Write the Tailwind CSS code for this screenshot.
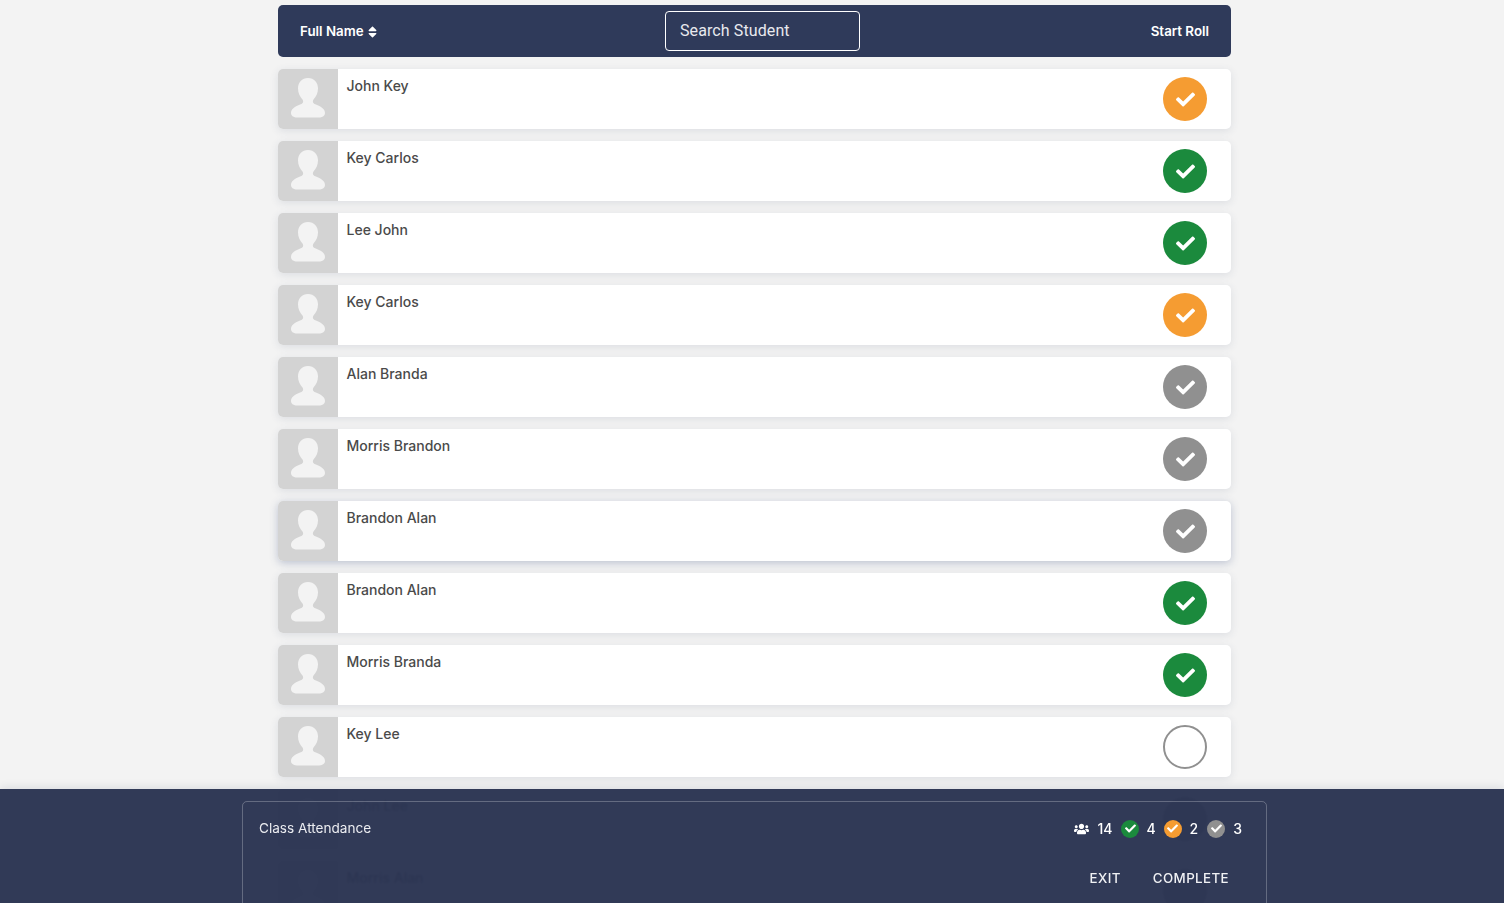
<!DOCTYPE html>
<html>
<head>
<meta charset="utf-8">
<script src="https://cdn.jsdelivr.net/npm/@tailwindcss/browser@4"></script>
</head>
<body class="bg-[#f3f3f3]">
<div class="relative h-[903px] overflow-hidden font-['Inter',sans-serif]">
  <div class="ml-[278px] w-[953px] pt-[5px] flex flex-col gap-3">
    <div class="h-[52px] rounded-[5px] bg-[#2f3a5a] flex items-center pl-[22px] pr-[22px] text-white">
      <div class="w-[365px] mt-[2px] flex items-center gap-1 text-[13.33px] font-semibold">Full Name
        <svg class="w-[9px] h-[14px]" viewBox="0 0 320 512" fill="currentColor"><path d="M41 288h238c21.4 0 32.1 25.9 17 41L177 448c-9.4 9.4-24.6 9.4-33.9 0L24 329c-15.1-15.1-4.4-41 17-41zm255-105L177 64c-9.4-9.4-24.6-9.4-33.9 0L24 183c-15.1 15.1-4.4 41 17 41h238c21.4 0 32.1-25.9 17-41z"/></svg>
      </div>
      <div class="w-[195px] h-10 rounded-[4px] border border-white flex items-center px-[14px] font-['Roboto',sans-serif] text-base tracking-[0.1px] text-[#e8e9ee]">Search Student</div>
      <div class="ml-auto mt-[2px] text-[13.33px] font-semibold">Start Roll</div>
    </div>

    <div class="h-[60px] rounded-[5px] bg-white shadow-[0_2px_8px_rgba(60,70,110,0.12)] flex overflow-hidden">
      <svg class="w-[60px] h-[60px] shrink-0 bg-[#d3d3d3]" viewBox="0 0 60 60" fill="#f3f3f3"><path d="M30 9c-6 0-10 4.500-10 10.500 0 4.500 2 8.500 4.500 11 1 1.500 1 3.500-1 4.500-3.500 1.500-10.500 3.500-10.500 9 0 3 3 4.500 6 4.500h22c3 0 6-1.500 6-4.500 0-5.500-7-7.500-10.500-9-2-1-2-3-1-4.500 2.500-2.500 4.500-6.500 4.500-11C40 13.500 36 9 30 9z"/></svg>
      <div class="flex-1 pl-[8.5px] pt-[7px] text-sm font-medium text-[#4a4a4a] leading-[19px]">John Key</div>
      <div class="pr-6 pt-2"><div class="w-11 h-11 rounded-full bg-[#f59c32] flex items-center justify-center text-white"><svg class="w-[19px] h-[19px]" viewBox="0 0 512 512" fill="currentColor"><path d="M173.898 439.404l-166.4-166.4c-9.997-9.997-9.997-26.206 0-36.204l36.203-36.204c9.997-9.998 26.207-9.998 36.204 0L192 312.69 432.095 72.596c9.997-9.997 26.207-9.997 36.204 0l36.203 36.204c9.997 9.997 9.997 26.206 0 36.204l-294.4 294.401c-9.998 9.997-26.207 9.997-36.204-.001z"/></svg></div></div>
    </div>
    <div class="h-[60px] rounded-[5px] bg-white shadow-[0_2px_8px_rgba(60,70,110,0.12)] flex overflow-hidden">
      <svg class="w-[60px] h-[60px] shrink-0 bg-[#d3d3d3]" viewBox="0 0 60 60" fill="#f3f3f3"><path d="M30 9c-6 0-10 4.500-10 10.500 0 4.500 2 8.500 4.500 11 1 1.500 1 3.500-1 4.500-3.500 1.500-10.500 3.500-10.500 9 0 3 3 4.500 6 4.500h22c3 0 6-1.500 6-4.500 0-5.500-7-7.500-10.500-9-2-1-2-3-1-4.500 2.500-2.500 4.500-6.500 4.500-11C40 13.500 36 9 30 9z"/></svg>
      <div class="flex-1 pl-[8.5px] pt-[7px] text-sm font-medium text-[#4a4a4a] leading-[19px]">Key Carlos</div>
      <div class="pr-6 pt-2"><div class="w-11 h-11 rounded-full bg-[#1b8a3d] flex items-center justify-center text-white"><svg class="w-[19px] h-[19px]" viewBox="0 0 512 512" fill="currentColor"><path d="M173.898 439.404l-166.4-166.4c-9.997-9.997-9.997-26.206 0-36.204l36.203-36.204c9.997-9.998 26.207-9.998 36.204 0L192 312.69 432.095 72.596c9.997-9.997 26.207-9.997 36.204 0l36.203 36.204c9.997 9.997 9.997 26.206 0 36.204l-294.4 294.401c-9.998 9.997-26.207 9.997-36.204-.001z"/></svg></div></div>
    </div>
    <div class="h-[60px] rounded-[5px] bg-white shadow-[0_2px_8px_rgba(60,70,110,0.12)] flex overflow-hidden">
      <svg class="w-[60px] h-[60px] shrink-0 bg-[#d3d3d3]" viewBox="0 0 60 60" fill="#f3f3f3"><path d="M30 9c-6 0-10 4.500-10 10.500 0 4.500 2 8.500 4.500 11 1 1.500 1 3.500-1 4.500-3.500 1.500-10.500 3.500-10.500 9 0 3 3 4.500 6 4.500h22c3 0 6-1.500 6-4.500 0-5.500-7-7.500-10.500-9-2-1-2-3-1-4.500 2.500-2.500 4.500-6.500 4.500-11C40 13.500 36 9 30 9z"/></svg>
      <div class="flex-1 pl-[8.5px] pt-[7px] text-sm font-medium text-[#4a4a4a] leading-[19px]">Lee John</div>
      <div class="pr-6 pt-2"><div class="w-11 h-11 rounded-full bg-[#1b8a3d] flex items-center justify-center text-white"><svg class="w-[19px] h-[19px]" viewBox="0 0 512 512" fill="currentColor"><path d="M173.898 439.404l-166.4-166.4c-9.997-9.997-9.997-26.206 0-36.204l36.203-36.204c9.997-9.998 26.207-9.998 36.204 0L192 312.69 432.095 72.596c9.997-9.997 26.207-9.997 36.204 0l36.203 36.204c9.997 9.997 9.997 26.206 0 36.204l-294.4 294.401c-9.998 9.997-26.207 9.997-36.204-.001z"/></svg></div></div>
    </div>
    <div class="h-[60px] rounded-[5px] bg-white shadow-[0_2px_8px_rgba(60,70,110,0.12)] flex overflow-hidden">
      <svg class="w-[60px] h-[60px] shrink-0 bg-[#d3d3d3]" viewBox="0 0 60 60" fill="#f3f3f3"><path d="M30 9c-6 0-10 4.500-10 10.500 0 4.500 2 8.500 4.500 11 1 1.500 1 3.500-1 4.500-3.500 1.500-10.500 3.500-10.500 9 0 3 3 4.500 6 4.500h22c3 0 6-1.500 6-4.500 0-5.500-7-7.500-10.500-9-2-1-2-3-1-4.500 2.500-2.500 4.500-6.500 4.500-11C40 13.500 36 9 30 9z"/></svg>
      <div class="flex-1 pl-[8.5px] pt-[7px] text-sm font-medium text-[#4a4a4a] leading-[19px]">Key Carlos</div>
      <div class="pr-6 pt-2"><div class="w-11 h-11 rounded-full bg-[#f59c32] flex items-center justify-center text-white"><svg class="w-[19px] h-[19px]" viewBox="0 0 512 512" fill="currentColor"><path d="M173.898 439.404l-166.4-166.4c-9.997-9.997-9.997-26.206 0-36.204l36.203-36.204c9.997-9.998 26.207-9.998 36.204 0L192 312.69 432.095 72.596c9.997-9.997 26.207-9.997 36.204 0l36.203 36.204c9.997 9.997 9.997 26.206 0 36.204l-294.4 294.401c-9.998 9.997-26.207 9.997-36.204-.001z"/></svg></div></div>
    </div>
    <div class="h-[60px] rounded-[5px] bg-white shadow-[0_2px_8px_rgba(60,70,110,0.12)] flex overflow-hidden">
      <svg class="w-[60px] h-[60px] shrink-0 bg-[#d3d3d3]" viewBox="0 0 60 60" fill="#f3f3f3"><path d="M30 9c-6 0-10 4.500-10 10.500 0 4.500 2 8.500 4.500 11 1 1.500 1 3.500-1 4.500-3.500 1.500-10.500 3.500-10.500 9 0 3 3 4.500 6 4.500h22c3 0 6-1.500 6-4.500 0-5.500-7-7.500-10.500-9-2-1-2-3-1-4.500 2.500-2.500 4.500-6.500 4.500-11C40 13.500 36 9 30 9z"/></svg>
      <div class="flex-1 pl-[8.5px] pt-[7px] text-sm font-medium text-[#4a4a4a] leading-[19px]">Alan Branda</div>
      <div class="pr-6 pt-2"><div class="w-11 h-11 rounded-full bg-[#909090] flex items-center justify-center text-white"><svg class="w-[19px] h-[19px]" viewBox="0 0 512 512" fill="currentColor"><path d="M173.898 439.404l-166.4-166.4c-9.997-9.997-9.997-26.206 0-36.204l36.203-36.204c9.997-9.998 26.207-9.998 36.204 0L192 312.69 432.095 72.596c9.997-9.997 26.207-9.997 36.204 0l36.203 36.204c9.997 9.997 9.997 26.206 0 36.204l-294.4 294.401c-9.998 9.997-26.207 9.997-36.204-.001z"/></svg></div></div>
    </div>
    <div class="h-[60px] rounded-[5px] bg-white shadow-[0_2px_8px_rgba(60,70,110,0.12)] flex overflow-hidden">
      <svg class="w-[60px] h-[60px] shrink-0 bg-[#d3d3d3]" viewBox="0 0 60 60" fill="#f3f3f3"><path d="M30 9c-6 0-10 4.500-10 10.500 0 4.500 2 8.500 4.500 11 1 1.500 1 3.500-1 4.500-3.500 1.500-10.500 3.500-10.500 9 0 3 3 4.500 6 4.500h22c3 0 6-1.500 6-4.500 0-5.500-7-7.500-10.500-9-2-1-2-3-1-4.500 2.500-2.500 4.500-6.500 4.500-11C40 13.500 36 9 30 9z"/></svg>
      <div class="flex-1 pl-[8.5px] pt-[7px] text-sm font-medium text-[#4a4a4a] leading-[19px]">Morris Brandon</div>
      <div class="pr-6 pt-2"><div class="w-11 h-11 rounded-full bg-[#909090] flex items-center justify-center text-white"><svg class="w-[19px] h-[19px]" viewBox="0 0 512 512" fill="currentColor"><path d="M173.898 439.404l-166.4-166.4c-9.997-9.997-9.997-26.206 0-36.204l36.203-36.204c9.997-9.998 26.207-9.998 36.204 0L192 312.69 432.095 72.596c9.997-9.997 26.207-9.997 36.204 0l36.203 36.204c9.997 9.997 9.997 26.206 0 36.204l-294.4 294.401c-9.998 9.997-26.207 9.997-36.204-.001z"/></svg></div></div>
    </div>
    <div class="h-[60px] rounded-[5px] bg-white shadow-[0_2px_8px_rgba(60,80,130,0.3)] flex overflow-hidden">
      <svg class="w-[60px] h-[60px] shrink-0 bg-[#d3d3d3]" viewBox="0 0 60 60" fill="#f3f3f3"><path d="M30 9c-6 0-10 4.500-10 10.500 0 4.500 2 8.500 4.500 11 1 1.500 1 3.500-1 4.500-3.500 1.500-10.500 3.500-10.500 9 0 3 3 4.500 6 4.500h22c3 0 6-1.500 6-4.500 0-5.500-7-7.500-10.500-9-2-1-2-3-1-4.500 2.500-2.500 4.500-6.500 4.500-11C40 13.500 36 9 30 9z"/></svg>
      <div class="flex-1 pl-[8.5px] pt-[7px] text-sm font-medium text-[#4a4a4a] leading-[19px]">Brandon Alan</div>
      <div class="pr-6 pt-2"><div class="w-11 h-11 rounded-full bg-[#909090] flex items-center justify-center text-white"><svg class="w-[19px] h-[19px]" viewBox="0 0 512 512" fill="currentColor"><path d="M173.898 439.404l-166.4-166.4c-9.997-9.997-9.997-26.206 0-36.204l36.203-36.204c9.997-9.998 26.207-9.998 36.204 0L192 312.69 432.095 72.596c9.997-9.997 26.207-9.997 36.204 0l36.203 36.204c9.997 9.997 9.997 26.206 0 36.204l-294.4 294.401c-9.998 9.997-26.207 9.997-36.204-.001z"/></svg></div></div>
    </div>
    <div class="h-[60px] rounded-[5px] bg-white shadow-[0_2px_8px_rgba(60,70,110,0.12)] flex overflow-hidden">
      <svg class="w-[60px] h-[60px] shrink-0 bg-[#d3d3d3]" viewBox="0 0 60 60" fill="#f3f3f3"><path d="M30 9c-6 0-10 4.500-10 10.500 0 4.500 2 8.500 4.500 11 1 1.500 1 3.500-1 4.500-3.500 1.500-10.500 3.500-10.500 9 0 3 3 4.500 6 4.500h22c3 0 6-1.500 6-4.500 0-5.500-7-7.500-10.500-9-2-1-2-3-1-4.500 2.500-2.500 4.500-6.500 4.500-11C40 13.500 36 9 30 9z"/></svg>
      <div class="flex-1 pl-[8.5px] pt-[7px] text-sm font-medium text-[#4a4a4a] leading-[19px]">Brandon Alan</div>
      <div class="pr-6 pt-2"><div class="w-11 h-11 rounded-full bg-[#1b8a3d] flex items-center justify-center text-white"><svg class="w-[19px] h-[19px]" viewBox="0 0 512 512" fill="currentColor"><path d="M173.898 439.404l-166.4-166.4c-9.997-9.997-9.997-26.206 0-36.204l36.203-36.204c9.997-9.998 26.207-9.998 36.204 0L192 312.69 432.095 72.596c9.997-9.997 26.207-9.997 36.204 0l36.203 36.204c9.997 9.997 9.997 26.206 0 36.204l-294.4 294.401c-9.998 9.997-26.207 9.997-36.204-.001z"/></svg></div></div>
    </div>
    <div class="h-[60px] rounded-[5px] bg-white shadow-[0_2px_8px_rgba(60,70,110,0.12)] flex overflow-hidden">
      <svg class="w-[60px] h-[60px] shrink-0 bg-[#d3d3d3]" viewBox="0 0 60 60" fill="#f3f3f3"><path d="M30 9c-6 0-10 4.500-10 10.500 0 4.500 2 8.500 4.500 11 1 1.500 1 3.500-1 4.500-3.500 1.500-10.500 3.500-10.500 9 0 3 3 4.500 6 4.500h22c3 0 6-1.500 6-4.500 0-5.500-7-7.500-10.500-9-2-1-2-3-1-4.500 2.500-2.500 4.500-6.500 4.500-11C40 13.500 36 9 30 9z"/></svg>
      <div class="flex-1 pl-[8.5px] pt-[7px] text-sm font-medium text-[#4a4a4a] leading-[19px]">Morris Branda</div>
      <div class="pr-6 pt-2"><div class="w-11 h-11 rounded-full bg-[#1b8a3d] flex items-center justify-center text-white"><svg class="w-[19px] h-[19px]" viewBox="0 0 512 512" fill="currentColor"><path d="M173.898 439.404l-166.4-166.4c-9.997-9.997-9.997-26.206 0-36.204l36.203-36.204c9.997-9.998 26.207-9.998 36.204 0L192 312.69 432.095 72.596c9.997-9.997 26.207-9.997 36.204 0l36.203 36.204c9.997 9.997 9.997 26.206 0 36.204l-294.4 294.401c-9.998 9.997-26.207 9.997-36.204-.001z"/></svg></div></div>
    </div>
    <div class="h-[60px] rounded-[5px] bg-white shadow-[0_2px_8px_rgba(60,70,110,0.12)] flex overflow-hidden">
      <svg class="w-[60px] h-[60px] shrink-0 bg-[#d3d3d3]" viewBox="0 0 60 60" fill="#f3f3f3"><path d="M30 9c-6 0-10 4.500-10 10.500 0 4.500 2 8.500 4.500 11 1 1.500 1 3.500-1 4.500-3.500 1.500-10.500 3.500-10.500 9 0 3 3 4.500 6 4.500h22c3 0 6-1.500 6-4.500 0-5.500-7-7.500-10.500-9-2-1-2-3-1-4.500 2.500-2.500 4.500-6.500 4.500-11C40 13.500 36 9 30 9z"/></svg>
      <div class="flex-1 pl-[8.5px] pt-[7px] text-sm font-medium text-[#4a4a4a] leading-[19px]">Key Lee</div>
      <div class="pr-6 pt-2"><div class="w-11 h-11 rounded-full bg-white border-2 border-[#909090]"></div></div>
    </div>
    <div class="h-[60px] rounded-[5px] bg-white flex overflow-hidden">
      <svg class="w-[60px] h-[60px] shrink-0 bg-[#d3d3d3]" viewBox="0 0 60 60" fill="#f3f3f3"><path d="M30 9c-6 0-10 4.500-10 10.500 0 4.500 2 8.500 4.500 11 1 1.500 1 3.500-1 4.500-3.500 1.500-10.500 3.500-10.500 9 0 3 3 4.500 6 4.500h22c3 0 6-1.500 6-4.500 0-5.500-7-7.500-10.500-9-2-1-2-3-1-4.500 2.500-2.500 4.500-6.500 4.500-11C40 13.500 36 9 30 9z"/></svg>
      <div class="flex-1 pl-[8.5px] pt-[7px] text-sm font-medium text-[#4a4a4a] leading-[19px]">John Lee</div>
      <div class="pr-6 pt-2"><div class="w-11 h-11 rounded-full bg-[#909090]"></div></div>
    </div>
    <div class="h-[60px] rounded-[5px] bg-white flex overflow-hidden">
      <svg class="w-[60px] h-[60px] shrink-0 bg-[#d3d3d3]" viewBox="0 0 60 60" fill="#f3f3f3"><path d="M30 9c-6 0-10 4.500-10 10.500 0 4.500 2 8.500 4.500 11 1 1.500 1 3.500-1 4.500-3.500 1.500-10.500 3.500-10.500 9 0 3 3 4.500 6 4.500h22c3 0 6-1.500 6-4.500 0-5.500-7-7.500-10.500-9-2-1-2-3-1-4.500 2.500-2.500 4.500-6.500 4.500-11C40 13.500 36 9 30 9z"/></svg>
      <div class="flex-1 pl-[8.5px] pt-[7px] text-sm font-medium text-[#4a4a4a] leading-[19px]">Morris Alan</div>
      <div class="pr-6 pt-2"><div class="w-11 h-11 rounded-full bg-[#909090]"></div></div>
    </div>
  </div>

  <div class="absolute left-0 right-0 top-[789px] bottom-0 bg-[#2a3452]/97 backdrop-blur-[1px] pt-3 shadow-[0_-2px_8px_rgba(60,70,110,0.12)]">
    <div class="ml-[242px] w-[1025px] h-[120px] rounded-t-[5px] border border-white/25 text-white">
      <div class="flex items-center justify-between pl-4 pr-6 pt-[15px] h-[38px]">
        <div class="text-[13.6px] text-[#ecedf1]">Class Attendance</div>
        <div class="flex items-center text-sm font-medium">
          <svg class="w-[15px] h-[12px]" viewBox="0 0 640 512" fill="currentColor"><path d="M96 224c35.3 0 64-28.7 64-64s-28.7-64-64-64-64 28.7-64 64 28.7 64 64 64zm448 0c35.3 0 64-28.7 64-64s-28.7-64-64-64-64 28.7-64 64 28.7 64 64 64zm32 32h-64c-17.6 0-33.500 7.100-45.100 18.600 40.300 22.100 68.900 62 75.100 109.400h66c17.700 0 32-14.300 32-32v-32c0-35.300-28.700-64-64-64zm-256 0c61.900 0 112-50.100 112-112S381.900 32 320 32 208 82.100 208 144s50.100 112 112 112zm76.800 32h-8.300c-20.800 10-43.900 16-68.500 16s-47.600-6-68.500-16h-8.300C179.600 288 128 339.600 128 403.200V432c0 26.500 21.500 48 48 48h288c26.500 0 48-21.500 48-48v-28.800c0-63.600-51.600-115.200-115.200-115.200zm-223.700-13.400C161.500 263.100 145.600 256 128 256H64c-35.300 0-64 28.700-64 64v32c0 17.700 14.300 32 32 32h65.900c6.300-47.400 34.900-87.300 75.200-109.400z"/></svg>
          <span class="ml-2 pt-px">14</span>
          <span class="ml-[9px] w-[18px] h-[18px] rounded-full bg-[#1b8a3d] flex items-center justify-center"><svg class="w-[11px] h-[11px]" viewBox="0 0 512 512" fill="currentColor"><path d="M173.898 439.404l-166.4-166.4c-9.997-9.997-9.997-26.206 0-36.204l36.203-36.204c9.997-9.998 26.207-9.998 36.204 0L192 312.69 432.095 72.596c9.997-9.997 26.207-9.997 36.204 0l36.203 36.204c9.997 9.997 9.997 26.206 0 36.204l-294.4 294.401c-9.998 9.997-26.207 9.997-36.204-.001z"/></svg></span>
          <span class="ml-[7px] pt-px">4</span>
          <span class="ml-[8px] w-[18px] h-[18px] rounded-full bg-[#f59c32] flex items-center justify-center"><svg class="w-[11px] h-[11px]" viewBox="0 0 512 512" fill="currentColor"><path d="M173.898 439.404l-166.4-166.4c-9.997-9.997-9.997-26.206 0-36.204l36.203-36.204c9.997-9.998 26.207-9.998 36.204 0L192 312.69 432.095 72.596c9.997-9.997 26.207-9.997 36.204 0l36.203 36.204c9.997 9.997 9.997 26.206 0 36.204l-294.4 294.401c-9.998 9.997-26.207 9.997-36.204-.001z"/></svg></span>
          <span class="ml-2 pt-px">2</span>
          <span class="ml-[9px] w-[18px] h-[18px] rounded-full bg-[#909090] flex items-center justify-center"><svg class="w-[11px] h-[11px]" viewBox="0 0 512 512" fill="currentColor"><path d="M173.898 439.404l-166.4-166.4c-9.997-9.997-9.997-26.206 0-36.204l36.203-36.204c9.997-9.998 26.207-9.998 36.204 0L192 312.69 432.095 72.596c9.997-9.997 26.207-9.997 36.204 0l36.203 36.204c9.997 9.997 9.997 26.206 0 36.204l-294.4 294.401c-9.998 9.997-26.207 9.997-36.204-.001z"/></svg></span>
          <span class="ml-2 pt-px">3</span>
        </div>
      </div>
      <div class="flex justify-end gap-[32px] pr-[37px] pt-[29px] text-[13.33px] font-medium tracking-[0.4px] text-[#f0f1f4]">
        <span>EXIT</span><span>COMPLETE</span>
      </div>
    </div>
  </div>
</div>
</body>
</html>
